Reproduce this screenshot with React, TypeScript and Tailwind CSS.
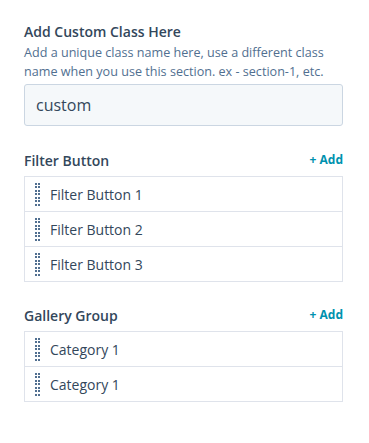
import React from 'react'

const font = { fontFamily: '"Open Sans", "Noto Sans", sans-serif' }

function Handle() {
  return (
    <div className="grid grid-cols-2 gap-x-[1px] gap-y-[1.5px] w-[5px]">
      {Array.from({ length: 14 }).map((_, i) => (
        <span key={i} className="block w-[2px] h-[2px] bg-[#516f90]" />
      ))}
    </div>
  )
}

function RepeaterList({ title, items }: { title: string; items: string[] }) {
  return (
    <div>
      <div className="flex items-center justify-between h-5 mb-[6px]">
        <span className="text-[14px] font-semibold text-[#33475b]">{title}</span>
        <button className="text-[12px] font-bold text-[#0091ae]">+ Add</button>
      </div>
      <ul className="border border-[#dfe3eb]">
        {items.map((item, i) => (
          <li
            key={i}
            className={`box-content flex items-center h-[34px] pl-[10px] gap-[10px] ${i > 0 ? 'border-t border-[#dfe3eb]' : ''}`}
          >
            <Handle />
            <span className="text-[14px] text-[#33475b]">{item}</span>
          </li>
        ))}
      </ul>
    </div>
  )
}

export default function App() {
  return (
    <div className="w-[369px] h-[443px] bg-white pl-6 pr-[26px] pt-[22px]" style={font}>
      <h3 className="text-[14px] font-semibold text-[#33475b] leading-5">Add Custom Class Here</h3>
      <p className="mt-[1px] text-[12.6px] leading-[19px] text-[#516f90]">
        Add a unique class name here, use a different class name when you use this section. ex - section-1, etc.
      </p>
      <div className="mt-[3px] h-[42px] flex items-center px-[11px] bg-[#f5f8fa] border border-[#cbd6e2] rounded-[3px] text-[16px] text-[#33475b]">
        custom
      </div>
      <div className="mt-[24px]">
        <RepeaterList title="Filter Button" items={['Filter Button 1', 'Filter Button 2', 'Filter Button 3']} />
      </div>
      <div className="mt-[23px]">
        <RepeaterList title="Gallery Group" items={['Category 1', 'Category 1']} />
      </div>
    </div>
  )
}
